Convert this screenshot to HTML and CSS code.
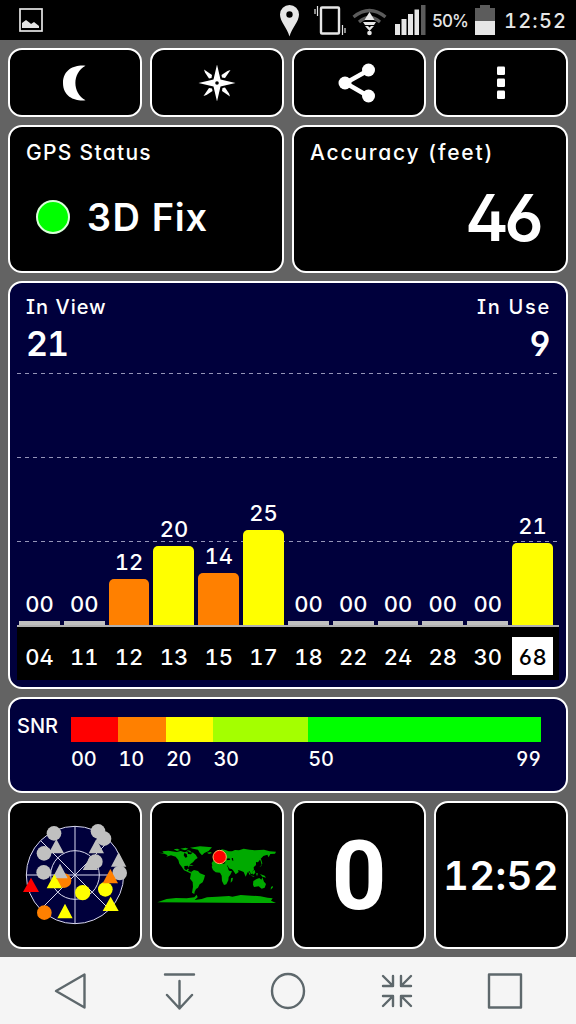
FILE: index.html
```html
<!DOCTYPE html>
<html lang="en">
<head>
    <meta charset="UTF-8">
    <meta name="viewport" content="width=device-width, initial-scale=1.0">
    <title>GPS Status</title>
    <link rel="stylesheet" href="styles.css">
</head>
<body>
    <div class="statusbar">
        <svg class="icon-picture" width="24" height="24" viewBox="0 0 24 24">
            <rect x="1" y="1" width="22" height="22" fill="none" stroke="#e6e6e6" stroke-width="1.7"/>
            <path d="M3 20v-5l4-3 4 3 1 1 3-2 5 4v2z" fill="#e6e6e6"/>
        </svg>
        <!-- location, vibrate, wifi, signal -->
        <svg class="icon-signals" width="150" height="40" viewBox="278 0 150 40">
            <path fill="#e6e6e6" fill-rule="evenodd" d="M289.500 5a9.500 9.500 0 0 1 9.500 9.500c0 7-7 13-9.500 22-2.500-9-9.500-15-9.500-22a9.500 9.500 0 0 1 9.500-9.500zm0 6.300a3.200 3.200 0 1 0 0 6.400 3.200 3.200 0 0 0 0-6.400z"/>
            <g fill="none" stroke="#e6e6e6">
                <rect x="321" y="7.500" width="18" height="26" rx="1" stroke-width="2.400"/>
                <path stroke-width="1.200" d="M315 9v5M317.500 6v10M342.500 25v10M345 28v5"/>
            </g>
            <g fill="none" stroke="#5c5c5c" stroke-width="3.200">
                <path d="M353.500 17q16-13 32 0M359 22q10.500-9 21 0"/>
            </g>
            <path fill="#e6e6e6" d="M369.500 12l5 8h-10zM363 22h13l-2 3h-9zM365 26h3l1.500 1.500 1.500-1.500h3l-4.500 5z"/>
            <circle cx="369.500" cy="33" r="2.300" fill="#e6e6e6"/>
            <path fill="#e6e6e6" d="M395 24h5v11h-5zM401.500 19h5v16h-5zM408 14h5v21h-5zM414.500 9.500h4.500v25.500h-4.500z"/>
            <path fill="#5c5c5c" d="M421 5h4.500v30h-4.500z"/>
        </svg>
        <span class="battery-level">50%</span>
        <svg class="icon-battery" width="20" height="30" viewBox="0 0 20 30">
            <path d="M5 0h10v3h5v13H0V3h5z" fill="#5c5c5c"/>
            <path d="M0 16h20v14H0z" fill="#e6e6e6"/>
        </svg>
        <span class="clock">12:52</span>
    </div>

    <div class="app">
        <div class="row toolbar">
            <button class="card">
                <svg width="24" height="36" viewBox="0 0 24 36"><path d="M22.500 .8C14-.5 0 3 0 18s14 18.500 22.500 17.200C9 28 9 8 22.500.8z"/></svg>
            </button>
            <button class="card">
                <svg width="38" height="38" viewBox="-19 -19 38 38">
                    <path d="M0-18.500L3.500-3.500 18.500 0 3.500 3.500 0 18.500-3.500 3.500-18.500 0-3.500-3.500z"/>
                    <path id="ray" d="M-13-13.500l8 5.500-.5 3-2.500.5-4-6z"/>
                    <use href="#ray" transform="rotate(90)"/>
                    <use href="#ray" transform="rotate(180)"/>
                    <use href="#ray" transform="rotate(270)"/>
                    <circle r="1.800" class="hole"/>
                </svg>
            </button>
            <button class="card share">
                <svg width="38" height="40" viewBox="0 0 38 40">
                    <path d="M30 7.500L7.500 20 30 33" fill="none" stroke="#fff" stroke-width="4.500"/>
                    <circle cx="30.500" cy="7" r="6.500"/>
                    <circle cx="7" cy="20" r="6.500"/>
                    <circle cx="30.500" cy="33" r="6.500"/>
                </svg>
            </button>
            <button class="card">
                <svg width="8" height="34" viewBox="0 0 8 34">
                    <rect y="0.500" width="8" height="8.500" rx="1.200"/>
                    <rect y="12.500" width="8" height="8.500" rx="1.200"/>
                    <rect y="24.500" width="8" height="8.500" rx="1.200"/>
                </svg>
            </button>
        </div>

        <div class="row summary">
            <div class="card">
                <div class="card-title">GPS Status</div>
                <div class="fix"><span class="fix-dot"></span><span class="fix-text">3D Fix</span></div>
            </div>
            <div class="card">
                <div class="card-title accuracy-title">Accuracy (feet)</div>
                <div class="accuracy">46</div>
            </div>
        </div>

        <div class="card chart">
            <div class="chart-header">
                <div>
                    <div class="chart-title">In View</div>
                    <div class="chart-total">21</div>
                </div>
                <div class="in-use">
                    <div class="chart-title">In Use</div>
                    <div class="chart-total">9</div>
                </div>
            </div>
            <div class="plot">
                <div class="sat"><span>00</span><div class="bar" style="height: 4px"></div></div>
                <div class="sat"><span>00</span><div class="bar" style="height: 4px"></div></div>
                <div class="sat"><span>12</span><div class="bar orange" style="height: 46px"></div></div>
                <div class="sat"><span>20</span><div class="bar yellow" style="height: 79px"></div></div>
                <div class="sat"><span>14</span><div class="bar orange" style="height: 52px"></div></div>
                <div class="sat"><span>25</span><div class="bar yellow" style="height: 95px"></div></div>
                <div class="sat"><span>00</span><div class="bar" style="height: 4px"></div></div>
                <div class="sat"><span>00</span><div class="bar" style="height: 4px"></div></div>
                <div class="sat"><span>00</span><div class="bar" style="height: 4px"></div></div>
                <div class="sat"><span>00</span><div class="bar" style="height: 4px"></div></div>
                <div class="sat"><span>00</span><div class="bar" style="height: 4px"></div></div>
                <div class="sat"><span>21</span><div class="bar yellow" style="height: 82px"></div></div>
            </div>
            <div class="sat-ids">
                <span>04</span>
                <span>11</span>
                <span>12</span>
                <span>13</span>
                <span>15</span>
                <span>17</span>
                <span>18</span>
                <span>22</span>
                <span>24</span>
                <span>28</span>
                <span>30</span>
                <span class="used">68</span>
            </div>
        </div>

        <div class="card snr">
            <div class="snr-title">SNR</div>
            <div class="scale">
                <div class="step s10 red">00</div>
                <div class="step s10 orange">10</div>
                <div class="step s10 yellow">20</div>
                <div class="step s20 lime">30</div>
                <div class="step s49 green"><span>50</span><span>99</span></div>
            </div>
        </div>

        <div class="row tiles">
            <div class="card">
                <svg width="104" height="104" viewBox="-156 -156 312 312">
                    <g fill="#00003c" stroke="#d8d8ee" stroke-width="3">
                        <circle r="146"/>
                        <circle r="73"/>
                        <path d="M-146 0H146M0-146V146M-103-103L103 103M103-103L-103 103"/>
                    </g>
                    <g fill="#c0c0c0">
                        <circle cx="-63" cy="-125" r="22"/>
                        <circle cx="-93" cy="-65" r="22"/>
                        <circle cx="-94" cy="-8" r="22"/>
                        <circle cx="69" cy="-131" r="22"/>
                        <circle cx="87" cy="-109" r="22"/>
                        <circle cx="61" cy="-40" r="22"/>
                        <circle cx="134" cy="-6" r="22"/>
                    </g>
                    <circle cx="-33" cy="17" r="22" fill="#ff8000"/>
                    <circle cx="-92" cy="113" r="22" fill="#ff8000"/>
                    <circle cx="23" cy="53" r="23" fill="#ff0"/>
                    <circle cx="91" cy="43" r="22" fill="#ff0"/>
                    <path fill="#c0c0c0" d="M-56-108l23 43h-46zM64-108l23 43h-46zM46-58l23 43h-46zM131-68l23 43h-46zM-45-34l23 44h-46z"/>
                    <path fill="#f00" d="M-132 8l24 43h-48z"/>
                    <path fill="#ff8000" d="M106-18l23 43h-46z"/>
                    <path fill="#ff0" d="M-62-3l23 43h-46zM107 65l24 43h-48zM-30 86l23 44h-46z"/>
                </svg>
            </div>
            <div class="card">
                <svg width="120" height="58" viewBox="36 154 360 174">
                    <g fill="#0a0">
                        <path d="M40 174l16 1-4-5 18-2 25 4 12-3 12 4 8-3 2 8 9 1 5-6 9 7 6 10-8 5-6 8-9 6-4 10-2-6-11 1 0 8 6 5 4-5 4 1-3 6 8 2 2 6-9-4-13-6-7-11-7-9-3-11-8-10-14-4-14 4 4-4-10-5z"/>
                        <path d="M86 164l11-2 8 4-9 3zM106 162l16-3 8 3-10 5zM125 166l10 2 6 6-8-1zM135 159l30-4 36 3-10 11-13 6-7 7-7-8-5-9-15-3z"/>
                        <path d="M127 211l11-1 8 4-9-1zM139 231l8-5 12 3 6 7 15 6-3 11-4 10-9 6-5 10-6 4-4 8-1 7-7-4 3-18-1-14-8-10z"/>
                        <path d="M186 174l10-2 5 3-9 3zM202 214l-2-9 5-7-1-8 8-9 3-7 16-10 10 2 10 4 10 0 9-4 12 1 14-5 18 3 15 2 28-2 17 5 19 1-3 6-14 1-5 10-4-8-12 4-9 10-7 9-6-1 0 9-7 7 1 9-6 3 2 9-5-2-5-8-5 4-6 13-6-14-9-4-8-2 2 6-9 7-8-12-4-4-13-2-5-4-15 5z"/>
                        <path d="M200 216l8-9 16-2 21 6 7 17 9 2-5 10-5 7-1 10-6 12-7 2-6-12-1-16-5-9-13-1-8-7zM258 251l6-2-2 10-5 5zM307 226l10 12-3 3zM320 231l9-5 2 8-6 6zM316 242l13 3-4 1zM333 236l6 0-3 9zM345 238l14 5 4 6-11-3zM325 259l10-6 8-3 6 5 3-7 5 13 6 7-4 11-9 3-9-7-14 2-3-7zM343 217l7-6-2-9-4-10 4 1 4 13-3 8zM378 277l5-3 1 4-7 7z"/>
                        <path d="M209 178l3-6 4 7 0 8-7 1z"/>
                        <path d="M37 323l28-10 28-3 32 1 23-3 7-8 3 8-9 8 21-3 16-5 30-2 36-2 10 2 25-5 32 2 27 2 22 4 15 2-5 7 15 7z"/>
                    </g>
                    <g fill="#000">
                        <path d="M118 175l7 3 2 9-6 2-5-7zM225 196l9 4 8 5-8 3-9-5zM244 192l9-1 3 4-9 2zM260 190l4 0 1 9-4-2zM245 211l3 2 8 14-4-2z"/>
                    </g>
                    <circle cx="224" cy="187" r="20" fill="#f00" stroke="#ffb060" stroke-width="3"/>
                </svg>
            </div>
            <div class="card speed">0</div>
            <div class="card time">12:52</div>
        </div>
    </div>

    <div class="navbar">
        <svg width="36" height="38" viewBox="0 0 36 38"><path d="M31.500 2.500v33L3 19z"/></svg>
        <svg width="36" height="38" viewBox="0 0 36 38"><path d="M3 2.500h29M17.500 9v27.500M5 23l12.500 13.500L30 23"/></svg>
        <svg width="36" height="38" viewBox="0 0 36 38"><ellipse cx="18" cy="19" rx="16" ry="17"/></svg>
        <svg width="36" height="38" viewBox="0 0 36 38">
            <path d="M4 4l9 9M14 4v10H4M32 4l-9 9M22 4v10h10M4 34l9-9M4 24h10v10M32 34l-9-9M22 34V24h10"/>
        </svg>
        <svg width="36" height="38" viewBox="0 0 36 38"><rect x="2" y="2.500" width="32" height="33"/></svg>
    </div>
</body>
</html>
```
FILE: styles.css
```css
* {
    margin: 0;
    padding: 0;
    box-sizing: border-box;
}

body {
    width: 576px;
    height: 1024px;
    overflow: hidden;
    background: #636363;
    color: #fff;
    font-family: Inter, 'Open Sans', sans-serif;
    font-weight: 500;
    font-feature-settings: "tnum", "cv02", "cv03", "cv04", "cv08", "cv11";
}

.statusbar {
    height: 40px;
    background: #000;
    color: #e6e6e6;
    display: flex;
    align-items: center;
    padding: 0 8px 0 19px;
}

.statusbar svg {
    flex-shrink: 0;
}

.icon-signals {
    margin-left: 235px;
}

.battery-level {
    width: 36px;
    margin: 2px 0 0 4px;
    font-size: 17px;
    letter-spacing: -1px;
}

.icon-battery {
    margin-left: 7px;
}

.clock {
    margin: 1px 0 0 9px;
    font-size: 20px;
    letter-spacing: 1.2px;
}

.app {
    height: 917px;
    padding: 8px;
    display: flex;
    flex-direction: column;
    gap: 8px;
}

.row {
    display: grid;
    grid-template-columns: repeat(4, 1fr);
    gap: 8px;
}

.card {
    background: #000;
    border: 2px solid #fff;
    border-radius: 14px;
    color: #fff;
}

.toolbar .card,
.tiles .card {
    display: flex;
    align-items: center;
    justify-content: center;
}

.toolbar {
    height: 69px;
}

.toolbar svg {
    fill: #fff;
}

.toolbar .share {
    padding-right: 4px;
}

.toolbar .hole {
    fill: #000;
}

.summary {
    height: 148px;
    grid-template-columns: 1fr 1fr;
}

.card-title {
    padding: 13px 16px 0;
    font-size: 21px;
    line-height: 26px;
    letter-spacing: 1.3px;
}

.accuracy-title {
    letter-spacing: 1.8px;
}

.fix {
    display: flex;
    align-items: center;
    gap: 17px;
    margin-top: 27px;
    padding-left: 26px;
}

.fix-dot {
    width: 34px;
    height: 34px;
    border-radius: 50%;
    border: 2px solid #d8ffd8;
    background: #0f0;
}

.fix-text {
    font-size: 38px;
    line-height: 48px;
    font-weight: 600;
    letter-spacing: 0.8px;
}

.accuracy {
    padding-right: 26px;
    text-align: right;
    font-size: 65px;
    line-height: 103px;
    font-weight: 600;
    letter-spacing: -5px;
}

.chart,
.snr {
    background: #00003c;
}

.chart {
    height: 408px;
    padding: 0 7px;
}

.chart-header {
    height: 90px;
    padding: 11px 9px 0;
    display: flex;
    justify-content: space-between;
}

.chart-title {
    font-size: 20px;
    line-height: 26px;
    letter-spacing: 1px;
}

.chart-total {
    font-size: 34px;
    line-height: 48px;
    font-weight: 600;
    letter-spacing: -1px;
}

.in-use {
    text-align: right;
}

.in-use .chart-title {
    letter-spacing: 1.7px;
    margin-right: -1px;
}

.plot {
    --dash: repeating-linear-gradient(90deg, #9494b8 0 4px, transparent 4px 8px);
    height: 254px;
    padding-right: 4px;
    display: flex;
    align-items: flex-end;
    border-bottom: 2px solid #b0b0b0;
    background-image: var(--dash), var(--dash), var(--dash);
    background-size: 100% 1px;
    background-position: 0 0, 0 84px, 0 168px;
    background-repeat: no-repeat;
}

.sat {
    flex: 1;
    padding: 0 2px;
    text-align: center;
    font-size: 22px;
    line-height: 28px;
}

.bar {
    margin-top: 3px;
    background: #c0c0c0;
}

.bar.orange,
.bar.yellow {
    border-radius: 5px 5px 0 0;
}

.bar.orange {
    background: #ff8000;
}

.bar.yellow {
    background: #ff0;
}

.sat-ids {
    height: 53px;
    padding: 10px 4px 5px 0;
    background: #000;
    display: flex;
}

.sat-ids span {
    flex: 1;
    margin: 0 2px;
    text-align: center;
    font-size: 22px;
    line-height: 40px;
}

.sat-ids .used {
    background: #fff;
    color: #000;
}

.snr {
    height: 96px;
    padding: 18px 25px 0 7px;
    display: flex;
}

.snr-title {
    width: 54px;
    font-size: 20px;
    line-height: 18px;
}

.scale {
    flex: 1;
    display: flex;
}

.step {
    border-top: 25px solid;
    color: #fff;
    font-size: 20px;
    line-height: 34px;
    letter-spacing: -0.3px;
}

.s10 {
    flex: 10;
}

.s20 {
    flex: 20;
}

.s49 {
    flex: 49;
    display: flex;
    justify-content: space-between;
}

.step.red {
    border-color: #f00;
}

.step.orange {
    border-color: #ff8000;
}

.step.yellow {
    border-color: #ff0;
}

.step.lime {
    border-color: #a4ff00;
}

.step.green {
    border-color: #0f0;
}

.tiles {
    height: 148px;
}

.tiles .speed {
    padding-top: 2px;
    font-family: Roboto, sans-serif;
    font-size: 96px;
    font-weight: 700;
}

.tiles .time {
    font-size: 40px;
    font-weight: 600;
    letter-spacing: 0.3px;
}

.navbar {
    height: 67px;
    background: #f5f5f5;
    display: flex;
    align-items: center;
    justify-content: space-between;
    padding: 0 53px;
}

.navbar svg {
    fill: none;
    stroke: #5e686c;
    stroke-width: 2.4;
    stroke-linejoin: round;
    stroke-linecap: round;
}
```
